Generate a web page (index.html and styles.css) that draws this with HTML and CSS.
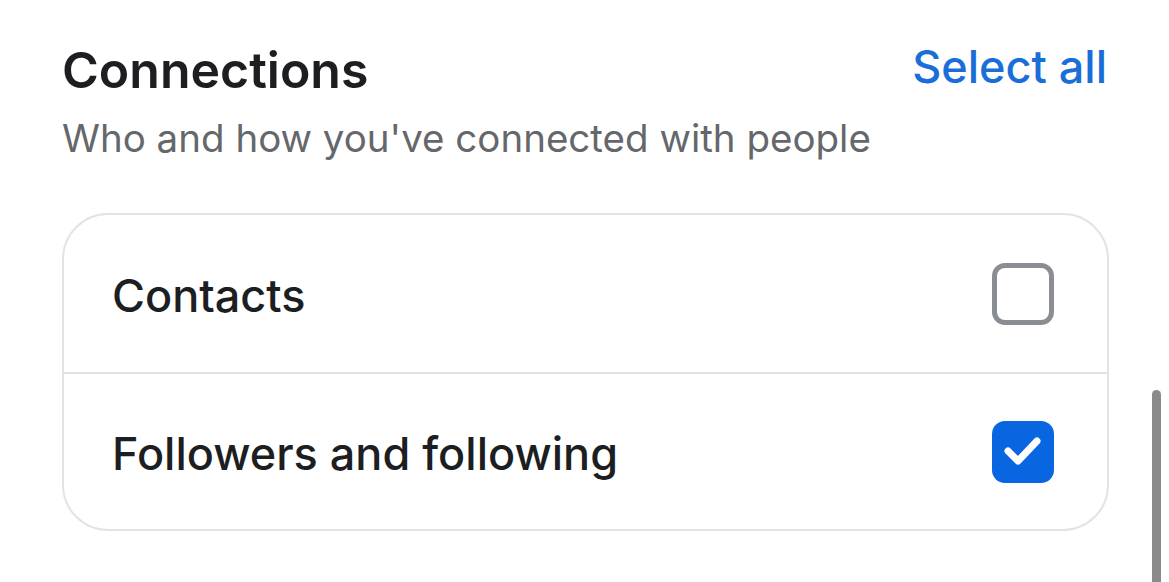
FILE: index.html
```html
<!DOCTYPE html>
<html>
<head>
<meta charset="utf-8">
<link rel="stylesheet" href="styles.css">
</head>
<body>
<div class="page">
  <section class="section">
    <div class="header">
      <h2 class="title">Connections</h2>
      <a class="select-all">Select all</a>
    </div>
    <p class="subtitle">Who and how you've connected with people</p>
    <div class="card">
      <div class="row">
        <span class="label">Contacts</span>
        <span class="box"></span>
      </div>
      <div class="row">
        <span class="label">Followers and following</span>
        <span class="box checked">
          <svg viewBox="0 0 62 62" width="62" height="62"><path d="M16 30 L26 40 L45 20" fill="none" stroke="#fff" stroke-width="7" stroke-linecap="round" stroke-linejoin="round"/></svg>
        </span>
      </div>
    </div>
  </section>
  <div class="scrollbar"></div>
</div>
</body>
</html>
```
FILE: styles.css
```css
html, body {
  margin: 0;
  padding: 0;
  background: #fff;
}
body {
  font-family: Inter, "Open Sans", sans-serif;
  color: #1c1e21;
}
.page {
  position: relative;
  width: 1169px;
  height: 582px;
  overflow: hidden;
}
.section {
  padding: 40px 60px 0 62px;
  width: 1047px;
}
.header {
  display: flex;
  justify-content: space-between;
  align-items: flex-start;
}
.title {
  margin: 0;
  font-size: 50px;
  font-weight: 600;
  line-height: 60px;
  color: #1c1e21;
}
.select-all {
  font-size: 45px;
  font-weight: 500;
  color: #1a6ed8;
  line-height: 60px;
  margin-right: 2px;
  margin-top: -3px;
}
.subtitle {
  margin: 15px 0 0;
  font-size: 38.5px;
  line-height: 46px;
  color: #65676b;
}
.card {
  margin-top: 52px;
  border: 2px solid #e2e3e5;
  border-radius: 46px;
  box-sizing: border-box;
  height: 318px;
}
.row {
  display: flex;
  align-items: center;
  justify-content: space-between;
  height: 157px;
  padding: 0 53px 0 48px;
}
.row + .row {
  border-top: 2px solid #e2e3e5;
  height: 155px;
}
.label {
  font-size: 45px;
  font-weight: 500;
  color: #1c1e21;
  position: relative;
  top: 2px;
}
.box {
  width: 62px;
  height: 62px;
  box-sizing: border-box;
  border: 5px solid #8a8d91;
  border-radius: 13px;
  display: flex;
}
.box.checked {
  border: none;
  background: #0866e0;
}
.scrollbar {
  position: absolute;
  left: 1152px;
  top: 390px;
  width: 9px;
  height: 220px;
  border-radius: 5px;
  background: #8a8a8a;
}
```
